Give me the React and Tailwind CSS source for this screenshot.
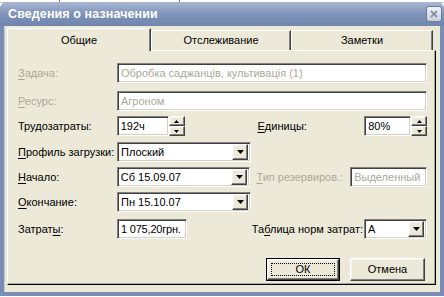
import React from "react";

// Классический диалог «Сведения о назначении»
const FONT = "font-['Liberation_Sans',Arial,sans-serif]";

const raised =
  "bg-[#ece9d8] border border-t-white border-l-white border-r-[#404040] border-b-[#404040] shadow-[inset_-1px_-1px_0_#808080,inset_1px_1px_0_#f4f3ee]";
const sunken =
  "bg-white border border-t-[#808080] border-l-[#808080] border-r-white border-b-white shadow-[inset_1px_1px_0_#404040,inset_-1px_-1px_0_#d4d0c8]";

const U = ({ children }) => <span className="underline underline-offset-[2px]">{children}</span>;

const Label = ({ children, disabled, className = "" }) => (
  <div className={`text-[11px] leading-none ${disabled ? "text-[#aca899]" : "text-black"} ${className}`}>
    {children}
  </div>
);

const Field = ({ value, disabled, className = "" }) => (
  <div className={`${sunken} h-[20px] flex items-center pl-[3px] pr-[1px] text-[11px] overflow-hidden whitespace-nowrap ${disabled ? "text-[#aca899]" : "text-black"} ${className}`}>
    {value}
  </div>
);

const DownArrow = () => (
  <svg width="7" height="4" viewBox="0 0 7 4">
    <path d="M0 0h7L3.5 4z" fill="#000" />
  </svg>
);

const Combo = ({ value, className = "" }) => (
  <div className={`${sunken} h-[20px] flex items-center pl-[3px] pr-[2px] text-[11px] ${className}`}>
    <span className="flex-1 truncate">{value}</span>
    <div className={`${raised} w-[16px] h-[16px] flex items-center justify-center`}>
      <DownArrow />
    </div>
  </div>
);

const Spin = ({ value, className = "" }) => (
  <div className={`flex h-[20px] ${className}`}>
    <Field value={value} className="flex-1" />
    <div className="w-[16px] flex flex-col">
      <div className={`${raised} h-[10px] flex items-center justify-center`}>
        <svg width="5" height="3" viewBox="0 0 5 3"><path d="M2.5 0L5 3H0z" fill="#000" /></svg>
      </div>
      <div className={`${raised} h-[10px] flex items-center justify-center`}>
        <svg width="5" height="3" viewBox="0 0 5 3"><path d="M0 0h5L2.5 3z" fill="#000" /></svg>
      </div>
    </div>
  </div>
);

const Tab = ({ children, active, className = "" }) => (
  <div
    className={`bg-[#ece9d8] border-t border-l border-white border-r border-r-[#404040] shadow-[inset_-1px_0_0_#808080] flex items-center justify-center text-[11px] ${
      active ? "h-[23px] -mb-[1px] relative z-10" : "h-[20px]"
    } ${className}`}
  >
    {children}
  </div>
);

export default function App() {
  return (
    <div className={`w-[444px] h-[297px] overflow-hidden bg-white ${FONT}`}>
      <div className="h-[3px] bg-white border-b border-[#c8c8c8] flex">
        <div className="w-[60px] border-r border-[#888]" />
        <div className="w-[120px] border-r border-[#888]" />
      </div>
      <div className="h-[294px] -mt-[1px] rounded-t-[7px] bg-[#7a8db4] flex flex-col">
        {/* заголовок */}
        <div className="h-[24px] rounded-t-[7px] bg-gradient-to-b from-[#aab8d4] via-[#7f92b9] to-[#7185ad] flex items-center justify-between pl-[8px] pr-[2px]">
          <span className="text-white font-bold text-[12.5px] tracking-[0.1px]">Сведения о назначении</span>
          <div className="w-[16px] h-[16px] rounded-[3px] bg-gradient-to-b from-[#f2f4f8] to-[#c9d0de] border border-[#6c7ea3] flex items-center justify-center">
            <svg width="8" height="8" viewBox="0 0 8 8">
              <path d="M1 1l6 6M7 1L1 7" stroke="#8a92a2" strokeWidth="1.8" />
            </svg>
          </div>
        </div>

        {/* тело окна */}
        <div className="flex-1 ml-[4px] mr-[4px] mb-[4px] bg-[#ece9d8] border-l border-[#c6cbd8] pt-[1px] pl-[2px] pr-[4px] flex flex-col">
          <div className="flex items-end h-[23px]">
            <Tab active className="w-[144px]">Общие</Tab>
            <Tab className="w-[140px]">Отслеживание</Tab>
            <Tab className="w-[142px]">Заметки</Tab>
          </div>

          <div className="h-[235px] w-[429px] border-t border-l border-white border-r border-b border-r-black border-b-black shadow-[inset_-1px_-1px_0_#aca899] pl-[10px] pr-[8px] pt-[12px] flex flex-col">
            <div className="flex items-center h-[20px]">
              <Label disabled className="w-[99px]"><U>З</U>адача:</Label>
              <Field disabled value="Обробка саджанців, культивація (1)" className="flex-1" />
            </div>

            <div className="flex items-center h-[20px] mt-[8px]">
              <Label disabled className="w-[99px]"><U>Р</U>есурс:</Label>
              <Field disabled value="Агроном" className="flex-1" />
            </div>

            <div className="flex items-center h-[20px] mt-[5px]">
              <Label className="w-[99px]">Тру<U>д</U>озатраты:</Label>
              <Spin value="192ч" className="w-[68px]" />
              <Label className="ml-[73px] w-[107px]"><U>Е</U>диницы:</Label>
              <Spin value="80%" className="w-[63px]" />
            </div>

            <div className="flex items-center h-[20px] mt-[6px]">
              <Label className="w-[99px]"><U>П</U>рофиль загрузки:</Label>
              <Combo value="Плоский" className="w-[134px]" />
            </div>

            <div className="flex items-center h-[20px] mt-[5px]">
              <Label className="w-[99px]"><U>Н</U>ачало:</Label>
              <Combo value="Сб 15.09.07" className="w-[134px]" />
              <Label disabled className="ml-[6px] w-[94px]"><U>Т</U>ип резервиров.:</Label>
              <Field disabled value="Выделенный" className="w-[77px]" />
            </div>

            <div className="flex items-center h-[20px] mt-[5px]">
              <Label className="w-[99px]"><U>О</U>кончание:</Label>
              <Combo value="Пн 15.10.07" className="w-[134px]" />
            </div>

            <div className="flex items-center h-[20px] mt-[7px]">
              <Label className="w-[99px]">Затрат<U>ы</U>:</Label>
              <Field value="1 075,20грн." className="w-[70px] tracking-[-0.2px]" />
              <Label className="flex-1 text-right pr-[1px]">Та<U>б</U>лица норм затрат:</Label>
              <Combo value="А" className="w-[63px]" />
            </div>

            <div className="flex justify-end gap-[10px] mt-[19px] pr-[2px]">
              <div className="w-[74px] h-[23px] border border-black">
                <div className={`${raised} h-full flex items-center justify-center p-[3px]`}>
                  <div className="w-full h-full border border-dotted border-black flex items-center justify-center text-[11px]">
                    ОК
                  </div>
                </div>
              </div>
              <div className={`${raised} w-[75px] h-[23px] flex items-center justify-center text-[11px]`}>
                Отмена
              </div>
            </div>
          </div>
        </div>
      </div>
    </div>
  );
}
